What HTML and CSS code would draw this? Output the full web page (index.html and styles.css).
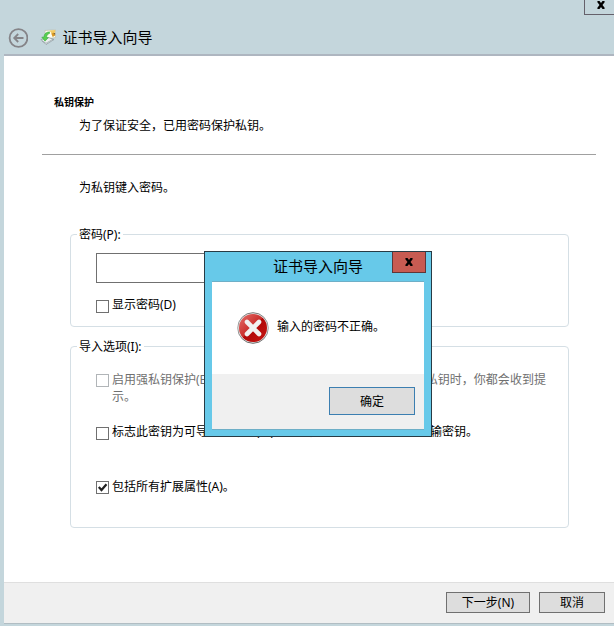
FILE: index.html
```
<!DOCTYPE html>
<html lang="zh-CN">
<head>
<meta charset="utf-8">
<title>证书导入向导</title>
<link rel="stylesheet" href="styles.css">
</head>
<body>
<main class="wizard">
  <header class="titlebar">
    <svg class="back" viewBox="0 0 20 20"><circle cx="10.5" cy="10" r="8.9"/><path d="M15.5 10H7M10.2 6L6.2 10l4 4"/></svg>
    <svg class="cert-icon" viewBox="0 0 16 16">
      <path d="M5 1.5L15.5.8v7.7L5.5 10z" fill="#fffef2" stroke="#b9b9a8" stroke-width=".6"/>
      <path d="M9.5 1.5l5.7-.4v2.5l-3.5 1z" fill="#f3cb62"/>
      <path d="M11.2 4.5l3-1 1 3-2.5 1.5z" fill="#d99a25"/>
      <path d="M13.5 4.2l1.6-.3v2z" fill="#6d5535"/>
      <path d="M1 10.5l8-1.8 5 1.8-8 5z" fill="#edf0f0" stroke="#87949a" stroke-width=".7"/>
      <path d="M2 12l4 2.2 7-4" fill="none" stroke="#87949a" stroke-width=".6"/>
      <path d="M9.5 2.8C6 3 4 5 4 8L1.8 8.2 5 12.2 8.4 8.5H6.6C6.7 6.5 7.6 5 9.5 4.5z" fill="#58cf50" stroke="#2ba434" stroke-width=".5"/>
    </svg>
    <h1>证书导入向导</h1>
    <button class="window-close" aria-label="关闭"><svg viewBox="0 0 10 8"><path d="M2 0l6 8M8 0L2 8"/></svg></button>
  </header>
  <section class="page">
    <div class="heading">
      <h2>私钥保护</h2>
      <p>为了保证安全，已用密码保护私钥。</p>
    </div>
    <p class="prompt">为私钥键入密码。</p>
    <fieldset class="password-group">
      <legend>密码(P):</legend>
      <div class="field"></div>
      <label class="option"><span class="box"></span><span>显示密码(D)</span></label>
    </fieldset>
    <fieldset class="options-group">
      <legend>导入选项(I):</legend>
      <label class="option disabled"><span class="box"></span><span>启用强私钥保护(E)。如果启用这个选项，每次应用程序使用私钥时，你都会收到提<br>示。</span></label>
      <label class="option"><span class="box"></span><span>标志此密钥为可导出的密钥(M)。这将允许你在稍后备份或传输密钥。</span></label>
      <label class="option"><span class="box"><svg viewBox="0 0 11 11"><path d="M1.8 5l2.7 3L9.5 2.3"/></svg></span><span>包括所有扩展属性(A)。</span></label>
    </fieldset>
  </section>
  <footer class="footer">
    <button class="button next">下一步(N)</button>
    <button class="button cancel">取消</button>
  </footer>
</main>
<div class="dialog" role="alertdialog">
  <div class="dialog-title">证书导入向导</div>
  <button class="dialog-close" aria-label="关闭"><svg viewBox="0 0 10 8"><path d="M2 0l6 8M8 0L2 8"/></svg></button>
  <div class="dialog-body">
    <div class="message">
      <svg class="error" viewBox="0 0 32 32">
        <defs>
          <linearGradient id="rim" x2="0" y2="1"><stop stop-color="#777"/><stop offset=".5" stop-color="#aaa"/><stop offset="1" stop-color="#666"/></linearGradient>
          <linearGradient id="red" x2="1" y2="1"><stop stop-color="#e5706c"/><stop offset=".48" stop-color="#c92d2b"/><stop offset=".5" stop-color="#b00808"/><stop offset="1" stop-color="#c81814"/></linearGradient>
        </defs>
        <circle cx="16" cy="16" r="15.3" fill="#e6e6e6" stroke="url(#rim)"/>
        <circle cx="16" cy="16" r="14" fill="url(#red)"/>
        <path d="M10 10l12 12M22 10L10 22" fill="none" stroke="#f1f1f1" stroke-width="4.6" stroke-linecap="round"/>
      </svg>
      <p>输入的密码不正确。</p>
    </div>
    <div class="actions"><button class="button ok">确定</button></div>
  </div>
</div>
</body>
</html>
```
FILE: styles.css
```
* { box-sizing: border-box; }
body {
  position: relative;
  width: 614px;
  height: 626px;
  margin: 0;
  overflow: hidden;
  font: 12px/17px "Noto Sans", "Noto Sans CJK SC", sans-serif;
  color: #000;
  background: #c4d6dc;
}
h1, h2, p { margin: 0; font-weight: 400; }
svg { display: block; fill: none; }
button { padding: 0; font: inherit; color: inherit; }
.wizard { display: flex; flex-direction: column; height: 626px; padding: 0 0 2px 4px; }
.titlebar {
  position: relative;
  display: flex;
  flex: none;
  align-items: center;
  height: 56px;
  padding: 20px 0 0 4px;
  border-bottom: 2px solid #aeb6c0;
}
.back { width: 20px; height: 20px; margin-top: 2px; stroke: #858488; stroke-width: 1.8; }
.cert-icon { width: 16px; height: 16px; margin: 0 7px 0 12px; }
h1 { font-size: 15px; line-height: 20px; margin-left: -0.5px; }
.window-close {
  position: absolute;
  top: -6px;
  left: 580px;
  width: 46px;
  height: 21px;
  border: 1px solid #65616b;
  background: transparent;
}
.window-close svg { width: 10px; height: 8px; margin: 0 0 0 11px; stroke: #000; stroke-width: 2.4; }
.page { flex: 1; background: #fff; padding: 38px 18px 0 38px; }
.heading { height: 61px; border-bottom: 1px solid #a0a0a0; padding-left: 12px; }
h2 { font-size: 10px; font-weight: 700; line-height: 17px; }
.heading p { margin: 6px 0 0 25px; }
.prompt { margin: 24px 0 0 37px; }
fieldset { width: 499px; margin: 0 0 0 28px; padding: 0 0 0 25px; border: 1px solid #d5dfe5; border-radius: 4px; }
legend { height: 17px; margin-left: -19px; padding: 0 2px; }
.password-group { height: 101px; margin-top: 30px; }
.field { width: 300px; height: 30px; margin-top: 10px; border: 1px solid #707070; }
.option { display: flex; gap: 3px; white-space: nowrap; }
.password-group .option { margin-top: 13px; }
.box { flex: none; width: 13px; height: 13px; margin-top: 4px; border: 1px solid #707070; background: #fff; }
.box svg { width: 11px; height: 11px; stroke: #202020; stroke-width: 2.2; }
.options-group { height: 190px; margin-top: 11px; }
.options-group .option { margin-top: 37px; }
.options-group .option:last-child .box { margin-top: 3px; }
.options-group .disabled { margin-top: 16px; color: #707070; }
.disabled .box { margin-top: 3px; border-color: #b1b5b8; }
.options-group .disabled + .option { margin: 18px 0 38px; }
.options-group .disabled + .option + .option { margin-top: 0; }
.footer { display: flex; flex: none; gap: 9px; height: 42px; padding: 9px 9px 0 0; justify-content: flex-end; border-top: 1px solid #dfdfdf; border-bottom: 1px solid #b1bdc3; background: #f0f0f0; }
.button { height: 21px; border: 1px solid #707070; background: #ddd; }
.next { width: 84px; }
.cancel { width: 66px; }
.dialog { position: absolute; top: 251px; left: 204px; width: 228px; height: 186px; padding: 0 7px 7px; border: 1px solid #273b45; background: #67c9e9; }
.dialog-title { height: 29px; font-size: 15px; line-height: 28px; text-align: center; }
.dialog-close { position: absolute; top: 0; right: 5px; width: 34px; height: 21px; border: 1px solid #603638; border-top: 0; background: #c75b52; }
.dialog-close svg { width: 10px; height: 8px; margin: 0 auto; stroke: #000; stroke-width: 2.4; }
.dialog-body { display: flex; flex-direction: column; height: 149px; border-top: 1px solid #6eafc7; border-bottom: 1px solid #6eafc7; background: #fff; }
.message { display: flex; flex: 1; padding: 30px 0 0 25px; gap: 8px; }
.message p { margin-top: 6px; }
.error { width: 32px; height: 32px; }
.actions { height: 55px; padding: 13px 9px 0 0; text-align: right; background: #f0f0f0; }
.ok { width: 86px; height: 28px; border-color: #3c7fb1; }
```
